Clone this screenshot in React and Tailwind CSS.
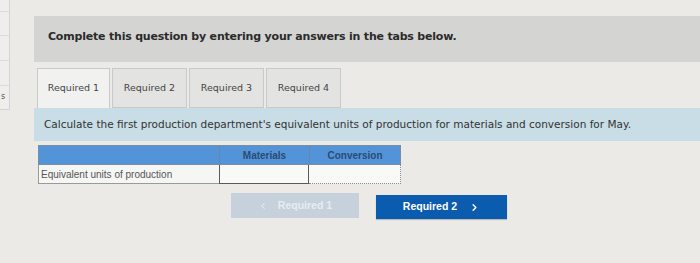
import { ChevronLeft, ChevronRight } from "lucide-react";

const tabs = ["Required 1", "Required 2", "Required 3", "Required 4"];

export default function App() {
  return (
    <div className="w-[700px] h-[263px] overflow-hidden bg-[#ebeae7] flex font-['DejaVu_Sans',sans-serif]">
      {/* clipped panel on the left edge */}
      <div className="w-[10px] h-[110px] border-r border-b border-[#d4d4d2] bg-[#efeeec] flex flex-col shrink-0">
        <div className="h-[12px] border-b border-[#dcdcda]" />
        <div className="h-[24px] border-b border-[#dcdcda]" />
        <div className="h-[25px] border-b border-[#dcdcda]" />
        <div className="h-[25px] border-b border-[#dcdcda]" />
        <div className="flex-1 text-[8px] text-[#555] leading-none pt-[7px] pl-[1px]">s</div>
      </div>

      <div className="flex-1 pl-[24px] pt-[16px] flex flex-col">
        <div className="h-[46px] bg-[#d4d4d3] flex items-center pl-[14px] pb-[4px]">
          <p className="text-[11px] font-bold text-[#2b2b2b] tracking-[-0.2px]">
            Complete this question by entering your answers in the tabs below.
          </p>
        </div>

        <div className="mt-[6px] ml-[3px] flex gap-[2px] h-[40px]">
          {tabs.map((t, i) => (
            <div
              key={t}
              className={
                i === 0
                  ? "w-[73px] bg-[#f1f1f0] border border-[#c9c9c8] border-b-0 flex items-center justify-center text-[9.5px] text-[#444]"
                  : "w-[75px] bg-[#e3e3e2] border border-[#c9c9c8] flex items-center justify-center text-[9.5px] text-[#444]"
              }
            >
              {t}
            </div>
          ))}
        </div>

        <div className="h-[33px] bg-[#c9dde6] flex items-center pl-[10px]">
          <p className="text-[10.5px] text-[#333]">
            Calculate the first production department's equivalent units of production for materials and conversion for May.
          </p>
        </div>

        <div className="mt-[4px] ml-[4px] w-[363px] font-['Liberation_Sans',sans-serif]">
          <div className="flex h-[20px] bg-[#5394d8] border border-[#7a8ea3]">
            <div className="w-[180px]" />
            <div className="w-[90px] border-l border-[#6a86a6] flex items-center justify-center text-[10px] font-bold text-[#2c4a73]">
              Materials
            </div>
            <div className="flex-1 border-l border-[#6a86a6] flex items-center justify-center text-[10px] font-bold text-[#2c4a73]">
              Conversion
            </div>
          </div>
          <div className="flex h-[19px] bg-[#f6f6f5]">
            <div className="w-[181px] border-l border-b border-[#9a9a9a] flex items-center pl-[2px] text-[10px] text-[#555]">
              Equivalent units of production
            </div>
            <div className="w-[90px] border border-t-0 border-[#5a5a5a] bg-[#f9f9f8]" />
            <div className="flex-1 border-r border-b border-dotted border-[#8a8a8a] bg-[#f9f9f8]" />
          </div>
        </div>

        <div className="mt-[9px] flex items-start">
          <div className="ml-[197px] w-[128px] h-[25px] bg-[#c6d1dc] flex items-center justify-center gap-[10px] text-[10.5px] font-bold text-[#e6ecf2] font-['Liberation_Sans',sans-serif]">
            <ChevronLeft size={10} strokeWidth={2.5} />
            Required 1
          </div>
          <div className="mt-[2px] ml-[17px] w-[131px] h-[24px] bg-[#0b5cae] flex items-center justify-center gap-[12px] text-[10.5px] font-bold text-white font-['Liberation_Sans',sans-serif] shadow-[0_1px_1px_rgba(0,0,0,0.2)]">
            Required 2
            <ChevronRight size={11} strokeWidth={3} />
          </div>
        </div>
      </div>
    </div>
  );
}
